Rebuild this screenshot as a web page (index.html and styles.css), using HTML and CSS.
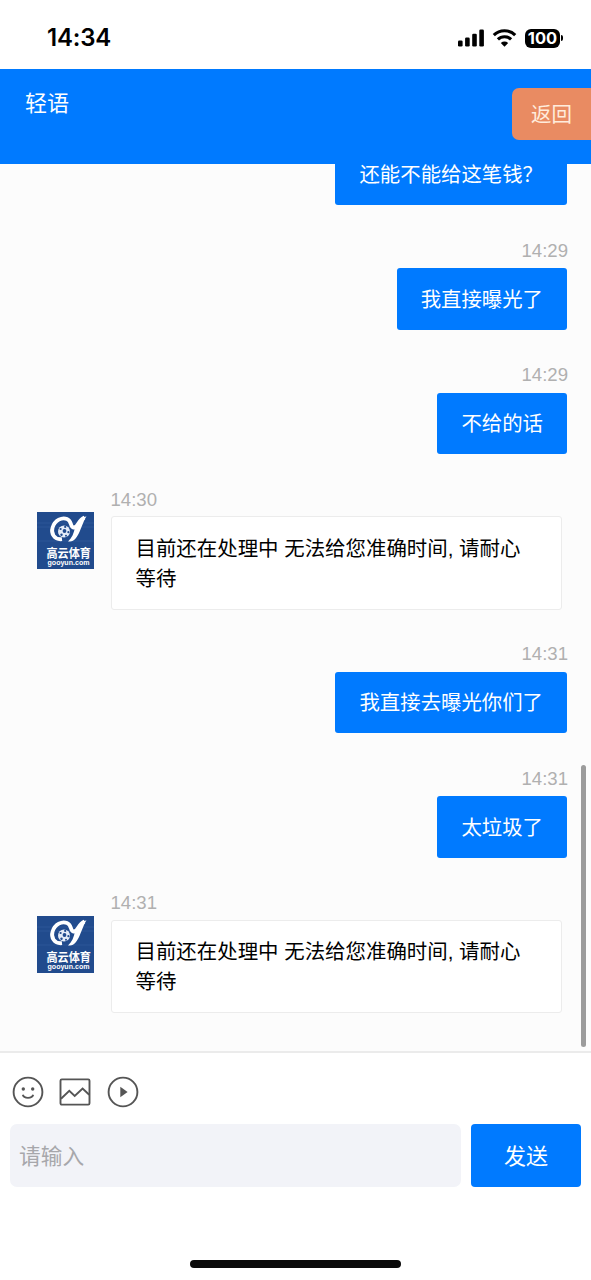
FILE: index.html
```html
<!DOCTYPE html>
<html lang="zh-CN">
<head>
<meta charset="utf-8">
<title>轻语</title>
<link rel="stylesheet" href="styles.css">
</head>
<body>
<div class="app">
  <div class="status">
    <span class="clock">14:34</span>
    <div class="indicators">
      <svg class="signal" viewBox="0 0 26 18"><rect y="11.5" width="4.6" height="6" rx="1.3"/><rect x="7.1" y="8.5" width="4.6" height="9" rx="1.3"/><rect x="14.2" y="4.7" width="4.6" height="12.8" rx="1.3"/><rect x="21.3" y=".5" width="4.6" height="17" rx="1.3"/></svg>
      <svg class="wifi" viewBox="0 0 25 18"><path d="M1.8 6.2A15.2 15.2 0 0 1 23.2 6.2M5.9 10.4A9.4 9.4 0 0 1 19.1 10.4" fill="none" stroke="#000" stroke-width="3.1"/><path d="M8.8 13.9Q12.5 11 16.2 13.9L12.5 17.7Z"/></svg>
      <div class="battery"><span class="level">100</span><i class="cap"></i></div>
    </div>
  </div>
  <header class="header">
    <span class="title">轻语</span>
    <button class="back">返回</button>
  </header>
  <main class="chat">
    <div class="msg sent"><p class="bubble">还能不能给这笔钱？</p></div>
    <div class="msg sent"><time>14:29</time><p class="bubble">我直接曝光了</p></div>
    <div class="msg sent"><time>14:29</time><p class="bubble">不给的话</p></div>
    <div class="msg received">
      <svg class="avatar" viewBox="0 0 57 57">
        <rect width="57" height="57" fill="#214b8d"/>
        <path d="M0 11H57M0 15H57M0 29H57" stroke="#2d5797"/>
        <path d="M25 27.2C17 28 13.8 21 15.6 15.5C18 8 25 5 30 7C35 9 33 15 36.5 15.5C41 16 41 8 47.5 5.5" fill="none" stroke="#fff" stroke-width="3.8"/>
        <path d="M42.5 9Q45.5 4.5 49.5 4.5C44.5 11 42 29.5 33 29.5H31C35 26 37 21 38 15Z" fill="#fff"/>
        <circle cx="27" cy="19.5" r="6" fill="#e4ecf8"/>
        <circle cx="27.5" cy="19" r="1.9" fill="#214b8d"/>
        <circle cx="23.6" cy="17" r="1.1" fill="#214b8d"/>
        <circle cx="28.2" cy="14.9" r="1.1" fill="#214b8d"/>
        <circle cx="31.4" cy="20.2" r="1.1" fill="#214b8d"/>
        <circle cx="24.5" cy="22.7" r="1.2" fill="#214b8d"/>
        <circle cx="29" cy="23.7" r="1" fill="#214b8d"/>
        <text class="logo-name" x="9.5" y="45.6" textLength="44.5" lengthAdjust="spacingAndGlyphs">高云体育</text>
        <text class="logo-site" x="10.5" y="53" textLength="42" lengthAdjust="spacingAndGlyphs">gooyun.com</text>
      </svg>
      <div class="content"><time>14:30</time><p class="bubble">目前还在处理中 无法给您准确时间, 请耐心等待</p></div>
    </div>
    <div class="msg sent"><time>14:31</time><p class="bubble">我直接去曝光你们了</p></div>
    <div class="msg sent"><time>14:31</time><p class="bubble">太垃圾了</p></div>
    <div class="msg received">
      <svg class="avatar" viewBox="0 0 57 57">
        <rect width="57" height="57" fill="#214b8d"/>
        <path d="M0 11H57M0 15H57M0 29H57" stroke="#2d5797"/>
        <path d="M25 27.2C17 28 13.8 21 15.6 15.5C18 8 25 5 30 7C35 9 33 15 36.5 15.5C41 16 41 8 47.5 5.5" fill="none" stroke="#fff" stroke-width="3.8"/>
        <path d="M42.5 9Q45.5 4.5 49.5 4.5C44.5 11 42 29.5 33 29.5H31C35 26 37 21 38 15Z" fill="#fff"/>
        <circle cx="27" cy="19.5" r="6" fill="#e4ecf8"/>
        <circle cx="27.5" cy="19" r="1.9" fill="#214b8d"/>
        <circle cx="23.6" cy="17" r="1.1" fill="#214b8d"/>
        <circle cx="28.2" cy="14.9" r="1.1" fill="#214b8d"/>
        <circle cx="31.4" cy="20.2" r="1.1" fill="#214b8d"/>
        <circle cx="24.5" cy="22.7" r="1.2" fill="#214b8d"/>
        <circle cx="29" cy="23.7" r="1" fill="#214b8d"/>
        <text class="logo-name" x="9.5" y="45.6" textLength="44.5" lengthAdjust="spacingAndGlyphs">高云体育</text>
        <text class="logo-site" x="10.5" y="53" textLength="42" lengthAdjust="spacingAndGlyphs">gooyun.com</text>
      </svg>
      <div class="content"><time>14:31</time><p class="bubble">目前还在处理中 无法给您准确时间, 请耐心等待</p></div>
    </div>
    <i class="scrollbar"></i>
  </main>
  <footer class="composer">
    <div class="tools">
      <svg class="tool" viewBox="0 0 32 32"><circle cx="16" cy="16" r="14.4"/><path d="M10.8 18.8Q11.7 21.9 16 21.9T21.2 18.8"/><circle class="solid" cx="11.3" cy="13" r="1.7"/><circle class="solid" cx="20.7" cy="13" r="1.7"/></svg>
      <svg class="tool" viewBox="0 0 32 32"><rect x="1.5" y="3.4" width="29" height="25.2" rx="1.3"/><path d="M2 22.8L10.3 14.8L15.7 20L23.6 12.5L30.2 18.8"/></svg>
      <svg class="tool" viewBox="0 0 32 32"><circle cx="16" cy="16" r="14.4"/><path class="solid" d="M13.3 10.8L20.6 16L13.3 21.2Z"/></svg>
    </div>
    <div class="entry">
      <div class="input">请输入</div>
      <button class="send">发送</button>
    </div>
    <i class="home"></i>
  </footer>
</div>
</body>
</html>
```
FILE: styles.css
```css
* { box-sizing: border-box; }
body {
  margin: 0;
  background: #fff;
  color: #000;
  font-family: "Liberation Sans", "Noto Sans CJK SC", sans-serif;
}
button { border: 0; padding: 0; font-family: inherit; color: #fff; }
.app {
  width: 591px;
  height: 1280px;
  display: flex;
  flex-direction: column;
  overflow: hidden;
}
.status {
  flex: none;
  height: 69px;
  padding: 0 28px 0 47px;
  display: flex;
  justify-content: space-between;
}
.clock {
  padding-top: 22px;
  font: 600 24px/31px Inter, sans-serif;
  letter-spacing: -0.2px;
}
.indicators { display: flex; align-items: center; height: 76px; }
.signal { width: 26px; height: 18px; }
.wifi { width: 25px; height: 18px; margin: 0 8px; }
.battery { display: flex; align-items: center; gap: 1px; }
.level {
  width: 35px;
  height: 19px;
  border-radius: 6px;
  background: #000;
  color: #fff;
  text-align: center;
  font: 700 16.5px/19px Inter, sans-serif;
}
.cap { width: 2px; height: 6px; border-radius: 0 2px 2px 0; background: #000; }

.header {
  flex: none;
  height: 94.5px;
  padding-left: 25px;
  display: flex;
  justify-content: space-between;
  background: #007aff;
}
.title { padding-top: 19px; color: #fff; font-size: 22px; line-height: 32px; }
.back {
  width: 79px;
  height: 52px;
  margin-top: 19px;
  padding-bottom: 2px;
  border-radius: 7px 0 0 7px;
  background: #e98b62;
  color: #ffecdc;
  font-size: 20.5px;
}

.chat {
  position: relative;
  flex: none;
  height: 887.5px;
  padding: 0 24px 38.75px 37.5px;
  display: flex;
  flex-direction: column;
  justify-content: flex-end;
  overflow: hidden;
  background: #fcfcfc;
}
.msg { flex: none; padding-top: 33.5px; }
.sent { display: flex; flex-direction: column; align-items: flex-end; }
.received { display: flex; gap: 16.4px; margin: -1px 5px -1px 0; }
.avatar { flex: none; width: 57px; height: 57px; margin: 25.5px 0 0 -0.4px; }
.content { flex: 1; }
time {
  display: block;
  height: 24px;
  margin-bottom: 5.5px;
  color: #b0b0b0;
  font-size: 18.6px;
  line-height: 24px;
}
.sent time { margin-right: -1px; }
.received time { height: 24px; line-height: 26px; }
.bubble {
  margin: 0;
  padding: 16.25px 24px 15.25px;
  border-radius: 3px;
  font-size: 20.4px;
  line-height: 30px;
}
.sent .bubble { background: #007aff; color: #fff; }
.received .bubble {
  border: 1px solid #ececec;
  font-size: 20.45px;
  background: #fff;
}
.scrollbar {
  position: absolute;
  right: 5px;
  top: 601px;
  width: 5px;
  height: 282px;
  border-radius: 3px;
  background: #9c9c9c;
}
.logo-name { fill: #fff; font: 700 12.5px "Noto Sans CJK SC", sans-serif; }
.logo-site { fill: #fff; font: 700 7px "Liberation Sans", sans-serif; }

.composer {
  flex: 1;
  padding: 24px 10px 0;
  display: flex;
  flex-direction: column;
  border-top: 2px solid #ebebeb;
}
.tools { display: flex; gap: 15.3px; padding-left: 2px; height: 47px; }
.tool { width: 32px; height: 32px; margin-top: -1px; fill: none; stroke: #555; stroke-width: 1.9; }
.tool .solid { fill: #555; stroke: none; }
.entry { display: flex; gap: 10px; height: 63px; }
.input {
  flex: 1;
  padding-left: 9px;
  border-radius: 7px;
  background: #f2f3f8;
  color: #a7a7ab;
  font-size: 21.7px;
  line-height: 65px;
}
.send {
  width: 110px;
  padding-bottom: 4px;
  border-radius: 4px;
  background: #007aff;
  font-size: 22px;
}
.home {
  align-self: center;
  width: 211px;
  height: 8px;
  margin-top: 73px;
  border-radius: 4px;
  background: #0a0a0a;
}
```
